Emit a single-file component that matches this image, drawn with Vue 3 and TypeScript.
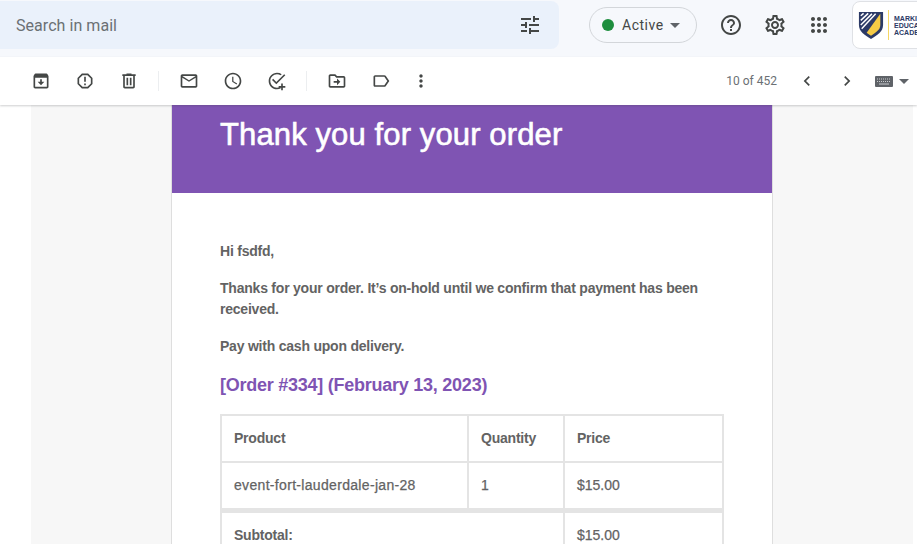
<script setup lang="ts">
const rows = [
  { product: 'event-fort-lauderdale-jan-28', qty: '1', price: '$15.00' },
]
</script>

<template>
  <div class="app">
    <header class="top">
      <div class="search">
        <span class="search-text">Search in mail</span>
        <svg class="tune" width="24" height="24" viewBox="0 0 24 24" fill="#444746"><path d="M3 17v2h6v-2H3zM3 5v2h10V5H3zm10 16v-2h8v-2h-8v-2h-2v6h2zM7 9v2H3v2h4v2h2V9H7zm14 4v-2H11v2h10zm-6-4h2V7h4V5h-4V3h-2v6z"/></svg>
      </div>
      <div class="status">
        <span class="dot"></span>
        <span class="status-text">Active</span>
        <span class="caret"></span>
      </div>
      <div class="top-icons">
        <svg width="24" height="24" viewBox="0 0 24 24" fill="#444746"><path d="M11 18h2v-2h-2v2zm1-16C6.48 2 2 6.48 2 12s4.48 10 10 10 10-4.48 10-10S17.52 2 12 2zm0 18c-4.41 0-8-3.59-8-8s3.59-8 8-8 8 3.59 8 8-3.59 8-8 8zm0-14c-2.21 0-4 1.79-4 4h2c0-1.1.9-2 2-2s2 .9 2 2c0 2-3 1.75-3 5h2c0-2.25 3-2.5 3-5 0-2.21-1.79-4-4-4z"/></svg>
        <svg width="24" height="24" viewBox="0 0 24 24" fill="#444746"><path d="M19.43 12.98c.04-.32.07-.64.07-.98 0-.34-.03-.66-.07-.98l2.11-1.65c.19-.15.24-.42.12-.64l-2-3.46c-.09-.16-.26-.25-.44-.25-.06 0-.12.01-.17.03l-2.49 1c-.52-.4-1.08-.73-1.69-.98l-.38-2.65C14.46 2.18 14.25 2 14 2h-4c-.25 0-.46.18-.49.42l-.38 2.65c-.61.25-1.17.59-1.69.98l-2.49-1c-.06-.02-.12-.03-.18-.03-.17 0-.34.09-.43.25l-2 3.46c-.13.22-.07.49.12.64l2.11 1.65c-.04.32-.07.65-.07.98 0 .33.03.66.07.98l-2.11 1.65c-.19.15-.24.42-.12.64l2 3.46c.09.16.26.25.44.25.06 0 .12-.01.17-.03l2.49-1c.52.4 1.08.73 1.69.98l.38 2.65c.03.24.24.42.49.42h4c.25 0 .46-.18.49-.42l.38-2.65c.61-.25 1.17-.59 1.69-.98l2.49 1c.06.02.12.03.18.03.17 0 .34-.09.43-.25l2-3.46c.12-.22.07-.49-.12-.64l-2.11-1.65zm-1.98-1.71c.04.31.05.52.05.73 0 .21-.02.43-.05.73l-.14 1.13.89.7 1.08.84-.7 1.21-1.27-.51-1.04-.42-.9.68c-.43.32-.84.56-1.25.73l-1.06.43-.16 1.13-.2 1.35h-1.4l-.19-1.35-.16-1.13-1.06-.43c-.43-.18-.83-.41-1.23-.71l-.91-.7-1.06.43-1.27.51-.7-1.21 1.08-.84.89-.7-.14-1.13c-.03-.31-.05-.54-.05-.74s.02-.43.05-.73l.14-1.13-.89-.7-1.08-.84.7-1.21 1.27.51 1.04.42.9-.68c.43-.32.84-.56 1.25-.73l1.06-.43.16-1.13.2-1.35h1.39l.19 1.35.16 1.13 1.06.43c.43.18.83.41 1.23.71l.91.7 1.06-.43 1.27-.51.7 1.21-1.07.85-.89.7.14 1.13zM12 8c-2.21 0-4 1.79-4 4s1.79 4 4 4 4-1.79 4-4-1.79-4-4-4zm0 6c-1.1 0-2-.9-2-2s.9-2 2-2 2 .9 2 2-.9 2-2 2z"/></svg>
        <svg width="24" height="24" viewBox="0 0 24 24" fill="#444746"><path d="M6 8c1.1 0 2-.9 2-2s-.9-2-2-2-2 .9-2 2 .9 2 2 2zm6 12c1.1 0 2-.9 2-2s-.9-2-2-2-2 .9-2 2 .9 2 2 2zm-6 0c1.1 0 2-.9 2-2s-.9-2-2-2-2 .9-2 2 .9 2 2 2zm0-6c1.1 0 2-.9 2-2s-.9-2-2-2-2 .9-2 2 .9 2 2 2zm6 0c1.1 0 2-.9 2-2s-.9-2-2-2-2 .9-2 2 .9 2 2 2zm4-8c0 1.1.9 2 2 2s2-.9 2-2-.9-2-2-2-2 .9-2 2zm-4 2c1.1 0 2-.9 2-2s-.9-2-2-2-2 .9-2 2 .9 2 2 2zm6 6c1.1 0 2-.9 2-2s-.9-2-2-2-2 .9-2 2 .9 2 2 2zm0 6c1.1 0 2-.9 2-2s-.9-2-2-2-2 .9-2 2 .9 2 2 2z"/></svg>
      </div>
      <div class="account">
        <svg width="26" height="30" viewBox="0 0 28 32">
          <path d="M1 2h26v14c0 7-6 11-13 15C7 27 1 23 1 16z" fill="#2c3a66"/>
          <path d="M24 4v12c0 5-4.500 8-10 11.500-1.800-1-3.300-2-4.700-3.200z" fill="#f6cb45"/>
          <path d="M3 6l3-2.500M3 11l8-7.500M3 16L15 4M4 20L19 4" stroke="#fff" stroke-width="1.600" fill="none"/>
        </svg>
        <span class="account-rule"></span>
        <div class="account-text"><span>MARKIT</span><span>EDUCATION</span><span>ACADEMY</span></div>
      </div>
    </header>

    <nav class="toolbar">
      <button class="tool">
        <svg width="20" height="20" viewBox="0 0 24 24" fill="#444746"><path d="M5.500 3h13c.6 0 1 .3 1.300.8L21 6v13c0 1.100-.9 2-2 2H5c-1.100 0-2-.9-2-2V6l1.200-2.200c.3-.5.7-.8 1.300-.8zM5 8v11h14V8H5zm6 2h2v3h3l-4 4-4-4h3v-3z"/></svg>
      </button>
      <button class="tool">
        <svg width="20" height="20" viewBox="0 0 24 24" fill="#444746"><path d="M15.730 3H8.270L3 8.270v7.460L8.270 21h7.460L21 15.730V8.270L15.730 3zM19 14.900L14.900 19H9.100L5 14.900V9.100L9.100 5h5.800L19 9.100v5.800zM11 7h2v6h-2zm0 8h2v2h-2z"/></svg>
      </button>
      <button class="tool">
        <svg width="20" height="20" viewBox="0 0 24 24" fill="#444746"><path d="M15 4V3H9v1H4v2h1v13c0 1.100.9 2 2 2h10c1.100 0 2-.9 2-2V6h1V4h-5zm2 15H7V6h10v13zM9 8h2v9H9zm4 0h2v9h-2z"/></svg>
      </button>
      <span class="sep"></span>
      <button class="tool">
        <svg width="20" height="20" viewBox="0 0 24 24" fill="#444746"><path d="M20 4H4c-1.100 0-2 .9-2 2v12c0 1.100.9 2 2 2h16c1.100 0 2-.9 2-2V6c0-1.100-.9-2-2-2zm0 14H4V8l8 5 8-5v10zm-8-7L4 6h16l-8 5z"/></svg>
      </button>
      <button class="tool">
        <svg width="20" height="20" viewBox="0 0 24 24" fill="#444746"><path d="M11.990 2C6.470 2 2 6.480 2 12s4.470 10 9.990 10C17.520 22 22 17.520 22 12S17.520 2 11.990 2zM12 20c-4.420 0-8-3.580-8-8s3.580-8 8-8 8 3.580 8 8-3.580 8-8 8zm.5-13H11v6l5.250 3.150.75-1.230-4.500-2.670z"/></svg>
      </button>
      <button class="tool">
        <svg width="20" height="20" viewBox="0 0 24 24" fill="#444746"><path d="M22 5.180L20.590 3.770l-9.420 9.420-3.760-3.760L6 10.840l5.170 5.170L22 5.180zM12 20c-4.410 0-8-3.590-8-8s3.590-8 8-8c1.570 0 3.020.46 4.260 1.240l1.450-1.450A9.930 9.930 0 0 0 12 2C6.480 2 2 6.480 2 12s4.480 10 10 10c1.730 0 3.360-.44 4.770-1.220l-1.500-1.500c-1 .46-2.100.72-3.270.72zM19 15h-2v3h-3v2h3v3h2v-3h3v-2h-3z"/></svg>
      </button>
      <span class="sep"></span>
      <button class="tool">
        <svg width="20" height="20" viewBox="0 0 24 24" fill="#444746"><path d="M20 6h-8l-2-2H4c-1.100 0-2 .9-2 2v12c0 1.100.9 2 2 2h16c1.100 0 2-.9 2-2V8c0-1.100-.9-2-2-2zm0 12H4V6h5.170l2 2H20v10zm-8-1l4-4-4-4v3H8v2h4z"/></svg>
      </button>
      <button class="tool">
        <svg width="20" height="20" viewBox="0 0 24 24" fill="#444746"><path d="M17.630 5.840C17.270 5.330 16.670 5 16 5L5 5.010C3.900 5.010 3 5.900 3 7v10c0 1.100.9 1.990 2 1.990L16 19c.67 0 1.270-.33 1.630-.84L22 12l-4.370-6.160zM16 17H5V7h11l3.550 5L16 17z"/></svg>
      </button>
      <button class="tool narrow">
        <svg width="20" height="20" viewBox="0 0 24 24" fill="#444746"><path d="M12 8c1.100 0 2-.9 2-2s-.9-2-2-2-2 .9-2 2 .9 2 2 2zm0 2c-1.100 0-2 .9-2 2s.9 2 2 2 2-.9 2-2-.9-2-2-2zm0 6c-1.100 0-2 .9-2 2s.9 2 2 2 2-.9 2-2-.9-2-2-2z"/></svg>
      </button>
      <div class="pager">
        <span class="count">10 of 452</span>
        <svg class="chev" width="20" height="20" viewBox="0 0 24 24" fill="#444746"><path d="M15.410 7.410L14 6l-6 6 6 6 1.410-1.410L10.830 12z"/></svg>
        <svg class="chev" width="20" height="20" viewBox="0 0 24 24" fill="#444746"><path d="M8.590 16.590L10 18l6-6-6-6-1.410 1.410L13.170 12z"/></svg>
        <svg class="kbd" width="18" height="11" viewBox="0 0 18 11"><rect width="18" height="11" rx="1" fill="#5f6368"/><path d="M2 3h14M2 5.500h14" stroke="#c9cbce" stroke-width="1" stroke-dasharray="1 1"/><path d="M4 8h10" stroke="#c9cbce" stroke-width="1"/></svg>
        <span class="caret small"></span>
      </div>
    </nav>

    <main class="viewport">
      <div class="canvas">
        <article class="card">
          <div class="banner"><h1>Thank you for your order</h1></div>
          <div class="content">
            <p>Hi fsdfd,</p>
            <p>Thanks for your order. It’s on-hold until we confirm that payment has been received.</p>
            <p>Pay with cash upon delivery.</p>
            <h2>[Order #334] (February 13, 2023)</h2>
            <table>
              <colgroup>
                <col class="c1" /><col class="c2" /><col class="c3" />
              </colgroup>
              <thead>
                <tr><th>Product</th><th>Quantity</th><th>Price</th></tr>
              </thead>
              <tbody>
                <tr v-for="r in rows" :key="r.product">
                  <td>{{ r.product }}</td><td>{{ r.qty }}</td><td>{{ r.price }}</td>
                </tr>
              </tbody>
              <tfoot>
                <tr><th colspan="2">Subtotal:</th><td>$15.00</td></tr>
              </tfoot>
            </table>
          </div>
        </article>
      </div>
    </main>
  </div>
</template>

<style>
html, body { margin: 0; overflow: hidden; background: #fff; }
</style>

<style scoped>
.app { width: 917px; height: 544px; overflow: hidden; display: flex; flex-direction: column; font-family: Roboto, "Liberation Sans", sans-serif; }
.top { height: 57px; flex: none; background: #f6f8fc; display: flex; align-items: flex-start; box-sizing: border-box; padding-top: 1px; }
.search { width: 559px; height: 48px; flex: none; background: #eaf1fb; border-radius: 0 8px 8px 0; display: flex; align-items: center; justify-content: space-between; box-sizing: border-box; padding: 0 17px 0 16px; }
.search-text { font-size: 16px; letter-spacing: .05px; color: #6b7074; }
.status { margin: 6px 0 0 30px; width: 108px; height: 36px; flex: none; box-sizing: border-box; border: 1px solid #d3d6da; border-radius: 18px; display: flex; align-items: center; padding-left: 12px; }
.dot { width: 12px; height: 12px; border-radius: 50%; background: #1e8e3e; }
.status-text { margin-left: 8px; font-size: 14px; letter-spacing: .5px; color: #444746; }
.caret { margin-left: 6px; border-left: 5.500px solid transparent; border-right: 5.500px solid transparent; border-top: 5.500px solid #5f6368; }
.caret.small { margin-left: 6px; border-left-width: 5px; border-right-width: 5px; border-top-width: 5px; }
.top-icons { display: flex; gap: 20px; margin: 12px 0 0 22px; flex: none; }
.top-icons svg { display: block; }
.account { margin-left: 21px; width: 90px; height: 48px; flex: none; box-sizing: border-box; background: #fff; border: 1px solid #dfe1e5; border-radius: 8px; display: flex; align-items: center; padding-left: 5px; }
.account-rule { width: 1px; height: 30px; margin-left: 4px; background: #f6d765; flex: none; }
.account-text { margin-left: 5px; display: flex; flex-direction: column; font: 700 7px/7px "Liberation Sans", sans-serif; color: #2c3a66; white-space: nowrap; }
.toolbar { height: 48px; flex: none; background: #fff; display: flex; align-items: center; padding: 0 8px 0 19px; box-shadow: 0 1px 2px rgba(60,64,67,.25); position: relative; z-index: 1; }
.tool { width: 44px; height: 48px; flex: none; padding: 0; border: 0; background: none; display: flex; align-items: center; justify-content: center; }
.tool.narrow { width: 36px; }
.sep { width: 1px; height: 20px; margin: 0 8px 0 7px; background: #eceef0; flex: none; }
.pager { display: flex; align-items: center; margin-left: auto; }
.count { font-size: 12px; color: #6b7074; margin-right: 20px; }
.chev { margin-right: 20px; display: block; }
.kbd { margin-left: -2px; display: block; }
.viewport { flex: 1; min-height: 0; overflow: hidden; padding: 0 4px 0 31px; }
.canvas { background: #f7f7f7; height: 100%; padding-left: 140px; }
.card { width: 600px; background: #fff; border-left: 1px solid #dedede; border-right: 1px solid #dedede; min-height: 100%; }
.banner { height: 88px; background: #7f54b3; box-sizing: border-box; padding: 12px 48px 0; }
h1 { margin: 0; font: 400 31px/36px "Liberation Sans", Arial, sans-serif; letter-spacing: .12px; color: #fff; -webkit-text-stroke: .6px #fff; }
.content { padding: 48px 48px 0; font: 700 14px/21px "Liberation Sans", Arial, sans-serif; letter-spacing: -.22px; color: #636363; }
p { margin: 0 0 16px; }
h2 { margin: 0 0 17px; font: 700 18px/24px "Liberation Sans", Arial, sans-serif; letter-spacing: -.25px; color: #7f54b3; }
table { width: 502px; table-layout: fixed; border-collapse: collapse; border: 2px solid #e4e4e4; font: inherit; letter-spacing: inherit; color: inherit; }
.c1 { width: 247px; } .c2 { width: 96px; } .c3 { width: 159px; }
th, td { border: 2px solid #e4e4e4; padding: 12px; text-align: left; height: 21px; box-sizing: content-box; }
td { font-weight: 400; letter-spacing: .32px; -webkit-text-stroke: .25px #636363; }
td:last-child { letter-spacing: 0; }
tfoot th, tfoot td { border-top-width: 5px; }
</style>
